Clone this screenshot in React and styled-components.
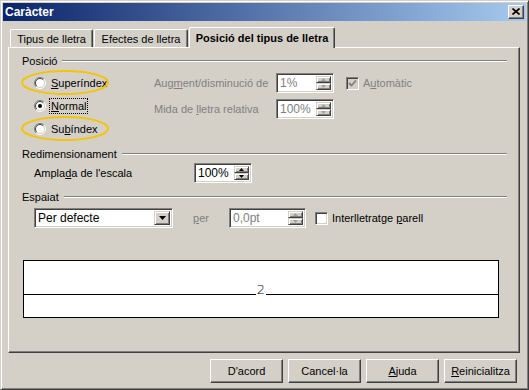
import styled, { createGlobalStyle } from "styled-components";

const Global = createGlobalStyle`
    body {
        margin: 0;
        background: #d4d0c8;
        font-family: 'Liberation Sans', Tahoma, sans-serif;
        font-size: 11px;
        color: #000;
    }
`

function Radio({checked}){
    return(
        <svg width="12" height="12" viewBox="0 0 12 12">
            <circle cx="6" cy="6" r="5" fill="#fff" />
            <path d="M9.9 2.1 A5.5 5.5 0 0 0 2.1 9.9" fill="none" stroke="#808080" />
            <path d="M9.9 2.1 A5.5 5.5 0 0 1 2.1 9.9" fill="none" stroke="#fff" />
            <path d="M9.2 2.8 A4.5 4.5 0 0 0 2.8 9.2" fill="none" stroke="#404040" />
            <path d="M9.2 2.8 A4.5 4.5 0 0 1 2.8 9.2" fill="none" stroke="#d4d0c8" />
            {checked && <circle cx="6" cy="6" r="2" fill="#000" />}
        </svg>
    )
}

function Ellipse(){
    return(
        <Ring width="88" height="25" viewBox="0 0 88 25">
            <ellipse cx="44" cy="12.5" rx="43" ry="11.5" fill="none" stroke="#f5c400" strokeWidth="2" />
        </Ring>
    )
}

function Spin({value, width, disabled}){
    return(
        <Field width={width}>
            <FieldText disabled={disabled}>{value}</FieldText>
            <SpinButtons>
                <SpinButton disabled={disabled}>
                    <svg width="5" height="3" viewBox="0 0 5 3"><path d="M2.5 0 L5 3 L0 3 Z" /></svg>
                </SpinButton>
                <SpinButton disabled={disabled}>
                    <svg width="5" height="3" viewBox="0 0 5 3"><path d="M0 0 L5 0 L2.5 3 Z" /></svg>
                </SpinButton>
            </SpinButtons>
        </Field>
    )
}

function Check({checked, disabled}){
    return(
        <CheckBox disabled={disabled}>
            {checked && (
                <svg width="9" height="9" viewBox="0 0 9 9">
                    <path d="M1 4 L3.5 6.5 L8 1.5" fill="none" stroke={disabled ? "#808080" : "#000"} strokeWidth="1.8" />
                </svg>
            )}
        </CheckBox>
    )
}

export default function App(){
    return(
        <>
            <Global />
            <Dialog>
                <TitleBar>
                    <Title>Caràcter</Title>
                    <CloseButton>
                        <svg width="8" height="7" viewBox="0 0 8 7">
                            <path d="M0.5 0.5 L7.5 6.5 M7.5 0.5 L0.5 6.5" stroke="#000" strokeWidth="1.6" />
                        </svg>
                    </CloseButton>
                </TitleBar>
                <Body>
                    <Tabs>
                        <Tab width={83}>Tipus de lletra</Tab>
                        <Tab width={94}>Efectes de lletra</Tab>
                        <Tab width={146} active>Posició del tipus de lletra</Tab>
                    </Tabs>
                    <Panel>
                        <GroupHeader top={6}><span>Posició</span><Rule /></GroupHeader>
                        <PositionBody>
                            <RadioColumn>
                                <RadioRow>
                                    <Ellipse />
                                    <Radio />
                                    <RadioLabel><U>S</U>uperíndex</RadioLabel>
                                </RadioRow>
                                <RadioRow>
                                    <Radio checked />
                                    <RadioLabel focused><U>N</U>ormal</RadioLabel>
                                </RadioRow>
                                <RadioRow>
                                    <Ellipse />
                                    <Radio />
                                    <RadioLabel>Su<U>b</U>índex</RadioLabel>
                                </RadioRow>
                            </RadioColumn>
                            <OptionColumn>
                                <Row>
                                    <Label width={122} disabled>Aug<U>m</U>ent/disminució de</Label>
                                    <Spin value="1%" width={58} disabled />
                                    <Gap size={12} />
                                    <Check checked disabled />
                                    <Label disabled>A<U>u</U>tomàtic</Label>
                                </Row>
                                <Row>
                                    <Label width={122} disabled>Mida de <U>l</U>letra relativa</Label>
                                    <Spin value="100%" width={58} disabled />
                                </Row>
                            </OptionColumn>
                        </PositionBody>

                        <GroupHeader top={7}><span>Redimensionament</span><Rule /></GroupHeader>
                        <IndentRow top={2}>
                            <Label width={160}>Ampla<U>d</U>a de l'escala</Label>
                            <Spin value="100%" width={58} />
                        </IndentRow>

                        <GroupHeader top={7}><span>Espaiat</span><Rule /></GroupHeader>
                        <IndentRow top={4}>
                            <Select>
                                <FieldText>Per defecte</FieldText>
                                <DropButton>
                                    <svg width="7" height="4" viewBox="0 0 7 4"><path d="M0 0 L7 0 L3.5 4 Z" /></svg>
                                </DropButton>
                            </Select>
                            <Gap size={20} />
                            <Label width={36} disabled><U>p</U>er</Label>
                            <Spin value="0,0pt" width={77} disabled />
                            <Gap size={9} />
                            <Check />
                            <Label>Interlletratge <U>p</U>arell</Label>
                        </IndentRow>

                        <Preview>
                            <BaseLine>
                                <LineSegment />
                                <Glyph>2</Glyph>
                                <LineSegment />
                            </BaseLine>
                        </Preview>
                    </Panel>
                    <Buttons>
                        <Button>D'acord</Button>
                        <Button>Cancel·la</Button>
                        <Button><U>A</U>juda</Button>
                        <Button><U>R</U>einicialitza</Button>
                    </Buttons>
                </Body>
            </Dialog>
        </>
    )
}

const Dialog = styled.div`
    width: 529px;
    height: 390px;
    box-sizing: border-box;
    background: #d4d0c8;
    border: 1px solid;
    border-color: #d4d0c8 #404040 #404040 #d4d0c8;
    box-shadow: inset 1px 1px #fff, inset -1px -1px #808080;
    padding: 2px;
    display: flex;
    flex-direction: column;
`

const TitleBar = styled.div`
    height: 18px;
    display: flex;
    align-items: center;
    justify-content: space-between;
    padding: 0 2px;
    background: linear-gradient(to right, #0a246a, #a6caf0);
`

const Title = styled.div`
    color: #fff;
    font-weight: bold;
    font-size: 12px;
`

const CloseButton = styled.div`
    width: 16px;
    height: 14px;
    box-sizing: border-box;
    background: #d4d0c8;
    border: 1px solid;
    border-color: #fff #404040 #404040 #fff;
    box-shadow: inset -1px -1px #808080;
    display: flex;
    align-items: center;
    justify-content: center;
    padding-bottom: 1px;
`

const Body = styled.div`
    flex: 1;
    display: flex;
    flex-direction: column;
    padding: 6px 6px 0 5px;
`

const Tabs = styled.div`
    display: flex;
    align-items: flex-end;
    height: 20px;
    padding-left: 2px;
    gap: 1px;
    position: relative;
    z-index: 1;
`

const Tab = styled.div`
    width: ${props => props.width}px;
    height: ${props => props.active ? 21 : 18}px;
    margin-bottom: ${props => props.active ? -1 : 0}px;
    box-sizing: border-box;
    background: #d4d0c8;
    border-top: 1px solid #fff;
    border-left: 1px solid #fff;
    border-right: 1px solid #404040;
    border-radius: 2px 2px 0 0;
    box-shadow: inset -1px 0 #808080;
    display: flex;
    align-items: center;
    justify-content: center;
    padding-top: ${props => props.active ? 0 : 1}px;
    font-weight: ${props => props.active ? "bold" : "normal"};
    white-space: nowrap;
`

const Panel = styled.div`
    height: 306px;
    box-sizing: border-box;
    border: 1px solid;
    border-color: #fff #404040 #404040 #fff;
    box-shadow: inset -1px -1px #808080;
    padding: 0 12px 0 13px;
    display: flex;
    flex-direction: column;
`

const GroupHeader = styled.div`
    height: 14px;
    margin-top: ${props => props.top}px;
    display: flex;
    align-items: center;
    gap: 5px;
    white-space: nowrap;
`

const Rule = styled.div`
    flex: 1;
    height: 0;
    border-top: 1px solid #808080;
    border-bottom: 1px solid #fff;
`

const PositionBody = styled.div`
    display: flex;
    margin-top: 3px;
`

const RadioColumn = styled.div`
    width: 120px;
    padding-left: 12px;
    display: flex;
    flex-direction: column;
`

const RadioRow = styled.div`
    position: relative;
    height: 23px;
    display: flex;
    align-items: center;
    gap: 5px;
`

const Ring = styled.svg`
    position: absolute;
    left: -13px;
    top: -1px;
    pointer-events: none;
`

const RadioLabel = styled.span`
    padding: 1px 1px;
    border: 1px dotted ${props => props.focused ? "#000" : "transparent"};
    margin-left: -2px;
`

const OptionColumn = styled.div`
    display: flex;
    flex-direction: column;
    gap: 6px;
    padding-top: 2px;
`

const Row = styled.div`
    height: 20px;
    display: flex;
    align-items: center;
`

const IndentRow = styled(Row)`
    margin-top: ${props => props.top}px;
    padding-left: 12px;
`

const Label = styled.span`
    width: ${props => props.width ? props.width + "px" : "auto"};
    margin-left: ${props => props.width ? 0 : 4}px;
    color: ${props => props.disabled ? "#808080" : "#000"};
    white-space: nowrap;
`

const U = styled.span`
    text-decoration: underline;
`

const Gap = styled.div`
    width: ${props => props.size}px;
    flex-shrink: 0;
`

const Sunken = styled.div`
    box-sizing: border-box;
    background: #fff;
    border: 1px solid;
    border-color: #808080 #fff #fff #808080;
    box-shadow: inset 1px 1px #404040, inset -1px -1px #d4d0c8;
    padding: 2px;
    display: flex;
    align-items: stretch;
`

const Field = styled(Sunken)`
    width: ${props => props.width}px;
    height: 20px;
`

const FieldText = styled.div`
    flex: 1;
    display: flex;
    align-items: center;
    padding-left: 1px;
    color: ${props => props.disabled ? "#808080" : "#000"};
    font-size: 12px;
`

const SpinButtons = styled.div`
    width: 15px;
    display: flex;
    flex-direction: column;
`

const Raised = styled.div`
    box-sizing: border-box;
    background: #d4d0c8;
    border: 1px solid;
    border-color: #d4d0c8 #404040 #404040 #d4d0c8;
    box-shadow: inset 1px 1px #fff, inset -1px -1px #808080;
    display: flex;
    align-items: center;
    justify-content: center;
`

const SpinButton = styled(Raised)`
    flex: 1;
    fill: ${props => props.disabled ? "#a0a0a0" : "#000"};
`

const Select = styled(Sunken)`
    width: 139px;
    height: 20px;
`

const DropButton = styled(Raised)`
    width: 16px;
`

const CheckBox = styled(Sunken)`
    width: 13px;
    height: 13px;
    padding: 0;
    background: ${props => props.disabled ? "#d4d0c8" : "#fff"};
    align-items: center;
    justify-content: center;
`

const Preview = styled.div`
    margin: 32px 0 0 1px;
    width: 476px;
    height: 58px;
    box-sizing: border-box;
    background: #fff;
    border: 1px solid #000;
    padding-top: 22px;
`

const BaseLine = styled.div`
    display: flex;
    align-items: flex-end;
    height: 12px;
`

const LineSegment = styled.div`
    flex: 1;
    border-bottom: 1px solid #000;
`

const Glyph = styled.span`
    font-family: 'DejaVu Sans', sans-serif;
    font-size: 13px;
    font-weight: 300;
    line-height: 12px;
    padding: 0 1px;
    margin-bottom: -1px;
`

const Buttons = styled.div`
    display: flex;
    justify-content: flex-end;
    gap: 5px;
    padding: 6px 3px 0 0;
`

const Button = styled(Raised)`
    width: 73px;
    height: 24px;
    border-color: #fff #404040 #404040 #fff;
    box-shadow: inset -1px -1px #808080;
`
